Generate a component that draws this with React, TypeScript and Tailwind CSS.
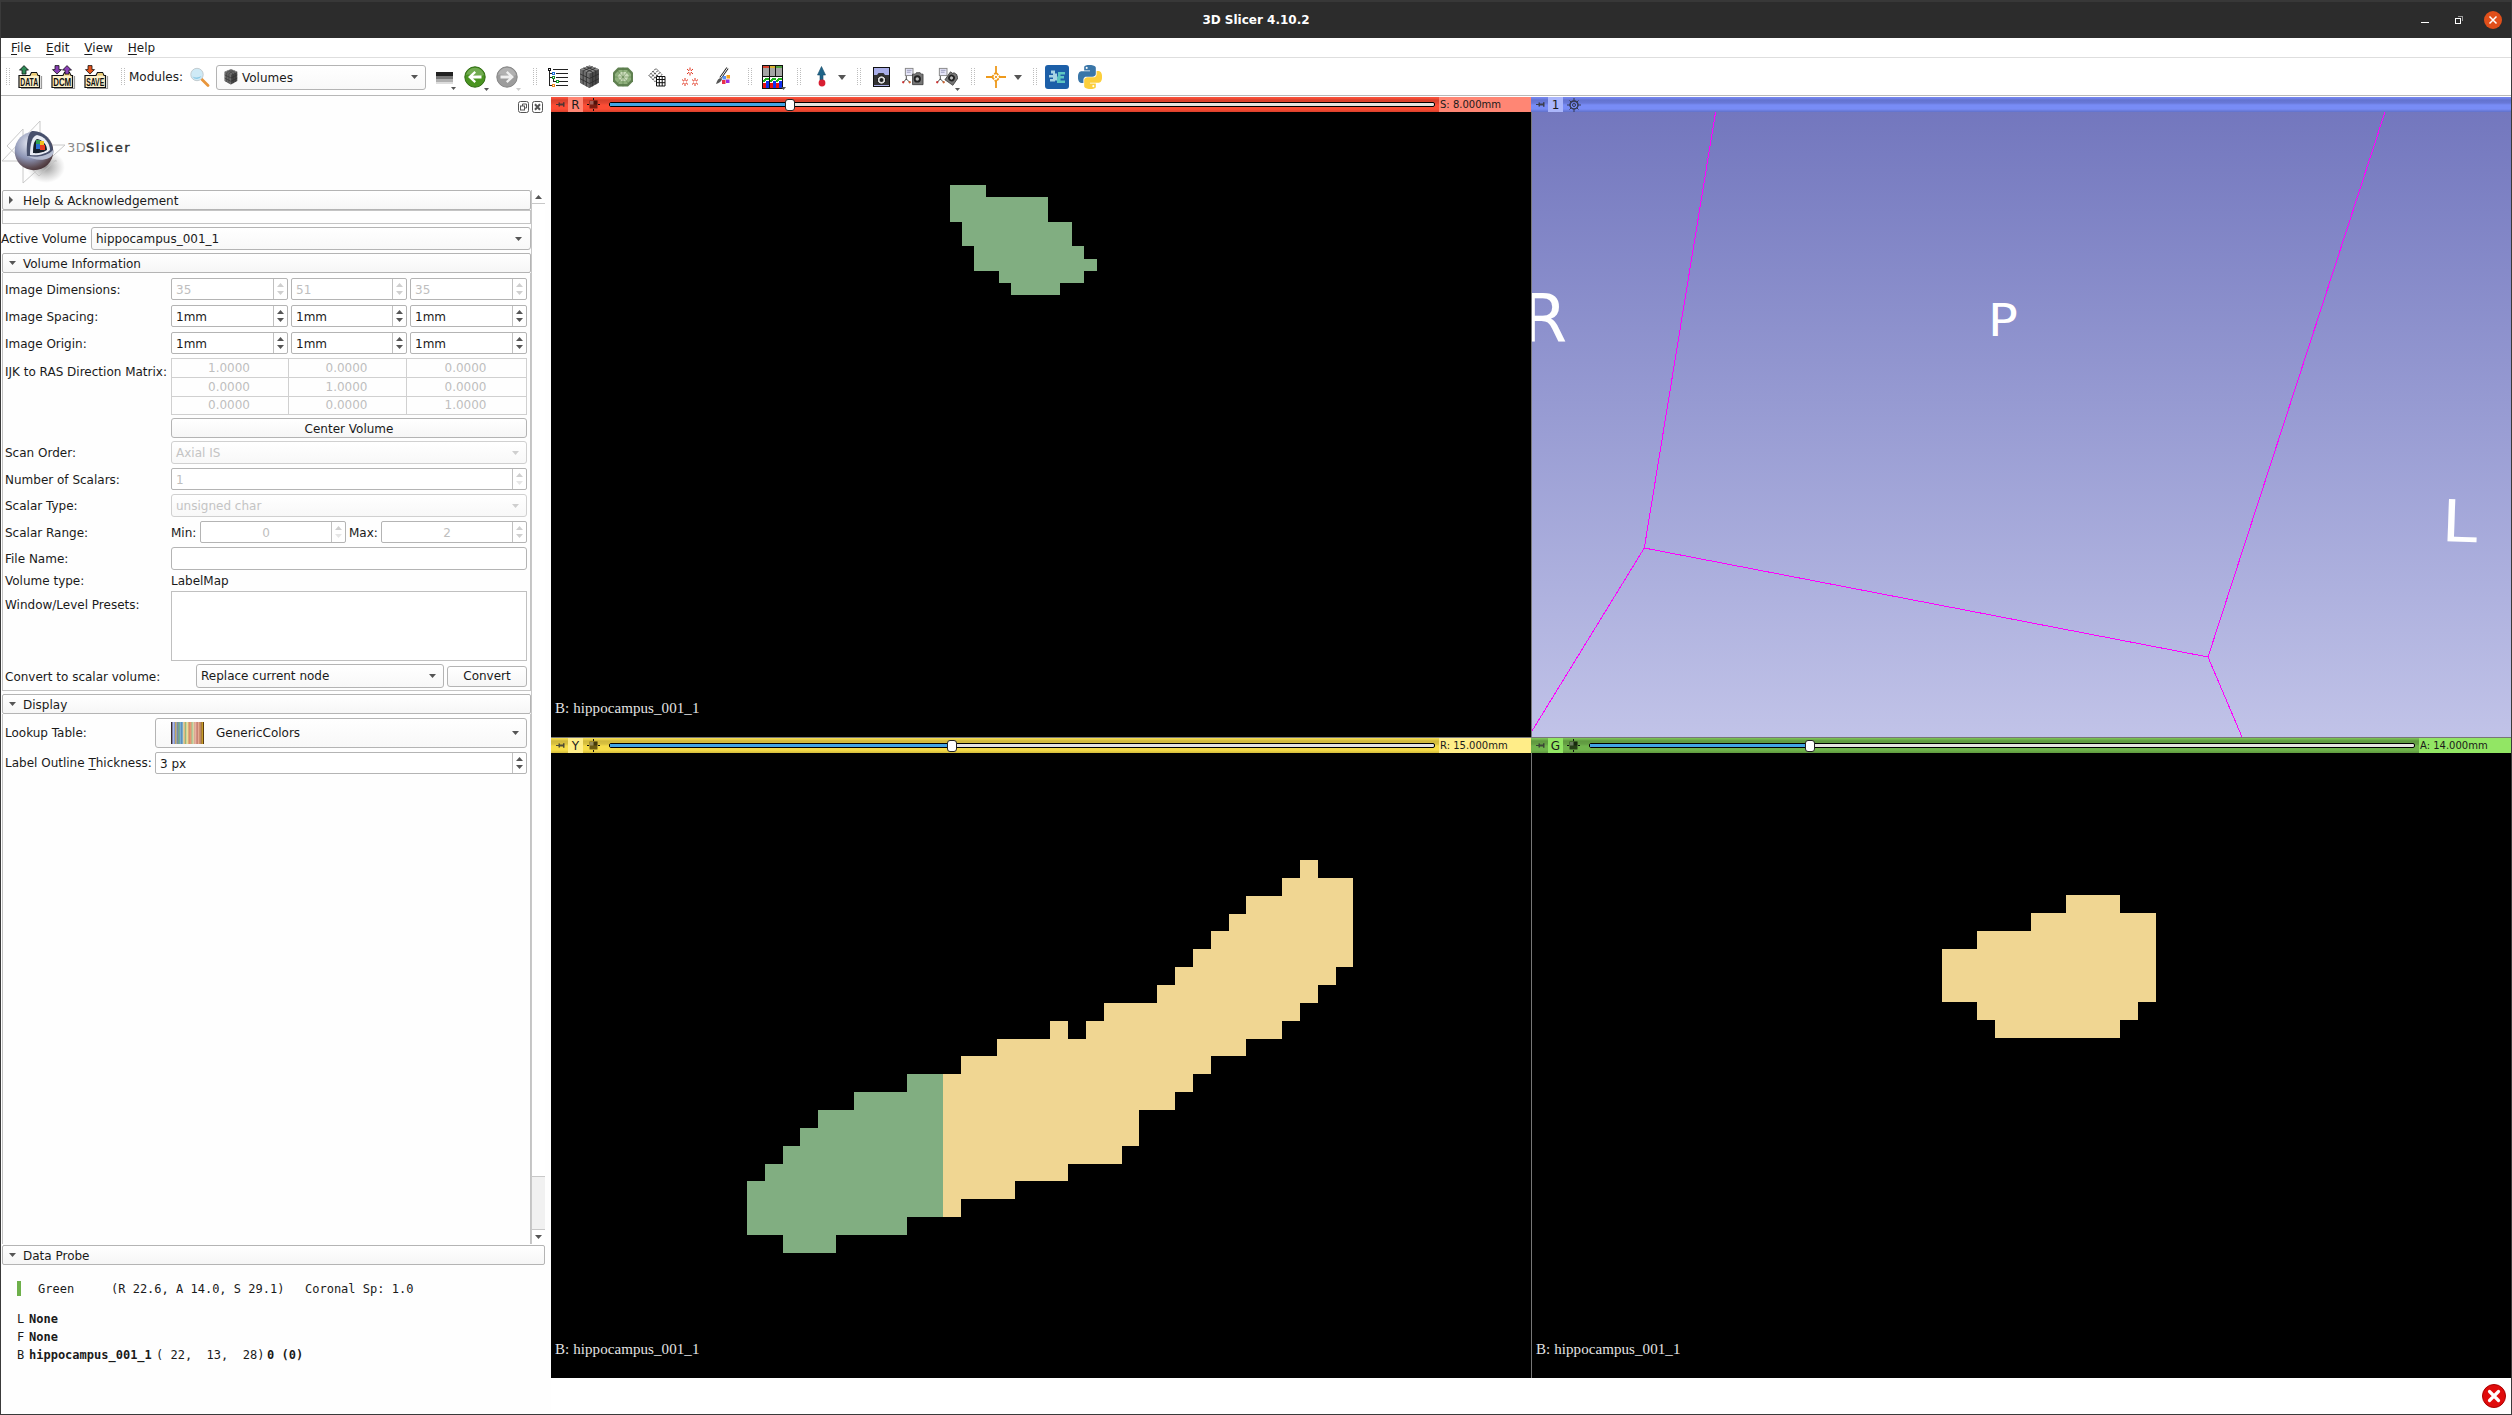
import React from "react";

const PYTHON_HALF =
  "M14.25.18l.9.2.73.26.59.3.45.32.34.34.25.34.16.33.1.3.04.26.02.2-.01.13V8.5l-.05.63-.13.55-.21.46-.26.38-.3.31-.33.25-.35.19-.35.14-.33.1-.3.07-.26.04-.21.02H8.77l-.69.05-.59.14-.5.22-.41.27-.33.32-.27.35-.2.36-.15.37-.1.35-.07.32-.04.27-.02.21v3.06H3.17l-.21-.03-.28-.07-.32-.12-.35-.18-.36-.26-.36-.36-.35-.46-.32-.59-.28-.73-.21-.88-.14-1.05-.05-1.23.06-1.22.16-1.04.24-.87.32-.71.36-.57.4-.44.42-.33.42-.24.4-.16.36-.1.32-.05.24-.01h.16l.06.01h8.16v-.83H6.18l-.01-2.75-.02-.37.05-.34.11-.31.17-.28.25-.26.31-.23.38-.2.44-.18.51-.15.58-.12.64-.1.71-.06.77-.04.84-.02 1.27.05zm-6.3 1.98l-.23.33-.08.41.08.41.23.34.33.22.41.09.41-.09.33-.22.23-.34.08-.41-.08-.41-.23-.33-.33-.22-.41-.09-.41.09z";

function Triangle({ dir = "down", className = "fill-[#555]", w = 7, h = 4 }: { dir?: "up" | "down" | "right"; className?: string; w?: number; h?: number }) {
  const pts = dir === "down" ? `0,0 ${w},0 ${w / 2},${h}` : dir === "up" ? `0,${h} ${w},${h} ${w / 2},0` : `0,0 ${w},${h / 2} 0,${h}`;
  return (
    <svg width={w} height={h} className={`shrink-0 ${className}`}>
      <polygon points={pts} />
    </svg>
  );
}

function Handle({ className = "" }: { className?: string }) {
  return (
    <svg width="4" height="18" className={`shrink-0 ${className}`} shapeRendering="crispEdges" fill="#bdbdbd">
      {[0, 2, 4, 6, 8, 10, 12, 14, 16].map((y) => (
        <React.Fragment key={y}>
          <rect x="0" y={y} width="1" height="1" />
          <rect x="3" y={y} width="1" height="1" />
        </React.Fragment>
      ))}
    </svg>
  );
}

function FolderIcon({ label, arrows }: { label: string; arrows: { x: number; up: boolean; color: string }[] }) {
  return (
    <svg width="24" height="24" viewBox="0 0 24 24" className="shrink-0 overflow-visible">
      <path d="M3 23.5h20.5V11" fill="none" stroke="#999" strokeWidth="1.2" />
      <path d="M1 22.500V10.5h11l1.500-3h5l1.500 3h1.500V22.500z" fill="#fdf0c8" stroke="#111" strokeWidth="1.2" />
      <path d="M13 10.500l1-2.300h4.500l1 2.300z" fill="#e8c66a" />
      {arrows.map((a, i) => (
        <path
          key={i}
          d={a.up ? "M0 0l4.500 4.500h-2.500v4h-4v-4h-2.500z" : "M0 8.500l4.500-4.500h-2.500v-4h-4v4h-2.500z"}
          transform={`translate(${a.x} .6)`}
          fill={a.color}
          stroke="#111"
          strokeWidth=".8"
        />
      ))}
      <text x="11.200" y="20.800" textAnchor="middle" textLength="18" lengthAdjust="spacingAndGlyphs" fontFamily="Liberation Sans" fontWeight="bold" fontSize="10.500" fill="#111">
        {label}
      </text>
    </svg>
  );
}

function CubeIcon({ size }: { size: number }) {
  return (
    <svg width={size} height={size * 1.12} viewBox="0 0 20 22.400" className="shrink-0">
      <path d="M10 .5L19 4v13l-9 5-9-5V4z" fill="#4a4a4a" />
      <path d="M10 .5L19 4l-9 4-9-4z" fill="#8c8c8c" />
      <path d="M1 4l9 4v14l-9-5z" fill="#6f6f6f" />
      <path d="M4 5.500v13M7 6.800v13.500M1 8.500l9 4.300 9-4.300M1 13l9 4.600L19 13M13 6.800v13.500M16 5.500v13M4 2.800l9 4M7 1.600l9 4M16 2.800l-9 4M13 1.600l-9 4" stroke="#2d2d2d" strokeWidth=".8" fill="none" />
    </svg>
  );
}

function RoundArrow({ back }: { back?: boolean }) {
  return (
    <svg width="22" height="22" viewBox="0 0 22 22" className="shrink-0">
      <circle cx="11" cy="11" r="10.200" fill={back ? "#4a9421" : "#9c9c9c"} stroke={back ? "#2f6b12" : "#858585"} />
      <path d="M2 9a9.200 9.200 0 0 1 18 0c-5 3-12-2-18 0z" fill="#fff" opacity=".22" />
      <path
        d="M4 11l6.500-6 1.500 1.700-3 2.800h8.500v3H9l3 2.800-1.500 1.700z"
        transform={back ? undefined : "translate(22 0) scale(-1 1)"}
        fill={back ? "#fff" : "#efefef"}
      />
    </svg>
  );
}

function SmallCamera() {
  return (
    <g>
      <path d="M11 7h3l1-1.500h4L20 7h2v11H11z" fill="#777" stroke="#333" strokeWidth=".8" />
      <circle cx="16" cy="12" r="3.800" fill="#222" />
      <circle cx="16" cy="12" r="1.800" fill="#bbb" />
    </g>
  );
}

function TripodGraph() {
  return (
    <g>
      <rect x="3.500" y="1" width="8" height="7.500" fill="#e6e6f8" stroke="#888" />
      <path d="M5 3h5M5 5h4" stroke="#88a" strokeWidth=".8" />
      <path d="M4.500 9v4M4.500 12l-3.500 4M4.500 12l4 4" stroke="#444" fill="none" />
      <circle cx="1.300" cy="15.500" r="1.200" fill="#c33" />
      <circle cx="8" cy="15.500" r="1.200" fill="#c63" />
    </g>
  );
}

function Toolbar() {
  return (
    <div className="flex h-[38px] items-center border-b border-[#b8b8b8] bg-white pl-[5px] pt-px">
      <Handle />
      <div className="ml-2 flex gap-[9px]">
        <FolderIcon label="DATA" arrows={[{ x: 6, up: true, color: "#2e8b57" }]} />
        <FolderIcon label="DCM" arrows={[{ x: 6, up: false, color: "#8a3fb5" }, { x: 16, up: true, color: "#8a3fb5" }]} />
        <FolderIcon label="SAVE" arrows={[{ x: 6, up: false, color: "#e8541a" }]} />
      </div>
      <Handle className="ml-[13px]" />
      <span className="ml-1 w-[55px] pt-px">Modules:</span>
      <svg width="20" height="20" viewBox="0 0 20 20" className="ml-1.5 shrink-0">
        <path d="M11.500 12l6.500 6.500" stroke="#e8963c" strokeWidth="2.800" strokeLinecap="round" />
        <circle cx="7" cy="7.500" r="6.200" fill="#cfeaf6" stroke="#c3ccd0" />
        <path d="M2.500 9.500q4.500 2 9-.5a5 5 0 0 1-9 .5z" fill="#8fcbe6" />
      </svg>
      <div className="ml-1.5 flex h-[25px] w-[210px] items-center rounded-[3px] border border-[#b4b4b4] bg-gradient-to-b from-white to-[#f8f8f8] pl-[7px] pr-[7px]">
        <CubeIcon size={14} />
        <span className="ml-1 grow pt-[2px]">Volumes</span>
        <Triangle />
      </div>
      <div className="ml-[9px] flex w-[21px] flex-col items-end pt-[7px]">
        <svg width="17" height="15" className="mr-[3px]" shapeRendering="crispEdges">
          <rect width="17" height="4" fill="#222" />
          <rect y="4" width="17" height="3" fill="#777" />
          <rect y="7" width="17" height="3" fill="#b0b0b0" />
          <rect y="10" width="17" height="2" fill="#ddd" />
        </svg>
        <Triangle w={5} h={3} />
      </div>
      <div className="relative ml-2">
        <RoundArrow back />
        <span className="absolute -bottom-[3px] -right-[3px]"><Triangle w={5} h={3} /></span>
      </div>
      <div className="relative ml-[10px]">
        <RoundArrow />
        <span className="absolute -bottom-[3px] -right-[3px]"><Triangle w={5} h={3} className="fill-[#ccc]" /></span>
      </div>
      <Handle className="ml-[15px]" />
      {/* Module shortcuts */}
      <svg width="20" height="24" viewBox="0 0 20 24" className="ml-[11px] shrink-0" shapeRendering="crispEdges">
        <path d="M5 4.500h15M8 8.500h12M8 12.500h12M11 16.500h9M8 20.500h12" stroke="#222" fill="none" />
        <path d="M1.500 5v15.500h3M1.500 8.500h2M1.500 12.500h2M5.500 14v2.500h2" stroke="#222" fill="none" />
        <rect x=".5" y="3.500" width="2" height="2" fill="#fff" stroke="#111" />
        <rect x="4.500" y="7.500" width="2" height="2" fill="#fff" stroke="#1f6fd8" />
        <rect x="4.500" y="11.500" width="2" height="2" fill="#fff" stroke="#1a8a2a" />
        <rect x="8.500" y="15.500" width="2" height="2" fill="#fff" stroke="#1aa030" />
        <rect x="4.500" y="19.500" width="2" height="2" fill="#fff" stroke="#f08a1a" />
      </svg>
      <div className="ml-[11px]"><CubeIcon size={21} /></div>
      <svg width="22" height="20" viewBox="0 0 22 20" className="ml-3 shrink-0">
        <path d="M6 .5h10l5 5v9l-5 5H6l-5-5v-9z" fill="#5f8050" />
        <path d="M7 3h8l4 4v6l-4 4H7l-4-4V7z" fill="#8fb07c" />
        <path d="M9 5h5l3 4-3 5H9L5.500 9.500z" fill="#cbdcbb" />
        <path d="M1 10h20M11 .5v19M5 3l12 14M17 3L5 17" stroke="#567a44" strokeWidth=".5" />
      </svg>
      <svg width="18" height="21" viewBox="0 0 18 21" className="ml-[14px] shrink-0" stroke="#111" fill="none">
        <path d="M1 8.500L8 1.500l6 6-7 7zM3 6.500l6 6M5 4.500l6 6M3 10.500l7-7M5 12.500l7-7" strokeDasharray="1.500 1" />
        <path d="M8.500 9.500h8.500v9.500H8.500z" fill="#fff" />
        <path d="M11.300 9.500v9.500M14.200 9.500v9.500M8.500 12.500H17M8.500 15.700H17" />
      </svg>
      <svg width="18" height="20" viewBox="0 0 18 20" className="ml-[15px] shrink-0" stroke="#e0301a" strokeWidth="1">
        {[[9, 4.500], [4, 15], [14, 15]].map(([x, y]) => (
          <path key={x} d={`M${x} ${y - 4}v3M${x} ${y + 1}v3M${x - 3} ${y - 2.500}l2 1.800M${x + 3} ${y - 2.500}l-2 1.800M${x - 3} ${y + 2.500}l2-1.800M${x + 3} ${y + 2.500}l-2-1.800`} />
        ))}
      </svg>
      <svg width="17" height="20" viewBox="0 0 17 20" className="ml-4 shrink-0">
        <path d="M12.500 1l-7 10" stroke="#222" strokeWidth="2.600" />
        <path d="M12.500 1l-7 10" stroke="#fff" strokeWidth="1" />
        <path d="M1 17c1-4 3-6 4.500-6l1.500 1.500C6 15 4 16 1 17z" fill="#555" />
        <rect x="7.500" y="9" width="3.500" height="3.500" fill="#5b93f5" />
        <rect x="11.500" y="8" width="3.500" height="3.500" fill="#f7a21a" />
        <rect x="7" y="13" width="3.500" height="4" fill="#e8304a" />
        <rect x="11" y="12.500" width="3.500" height="3.500" fill="#9a2be0" />
      </svg>
      <Handle className="ml-[16px]" />
      {/* Layout selector */}
      <div className="relative ml-[10px]">
        <svg width="21" height="24" viewBox="0 0 21 24" className="block" shapeRendering="crispEdges">
          <rect width="21" height="24" fill="#111" />
          <rect x="1" y="1" width="6" height="10" fill="#a5a5a5" /><rect x="1" y="1" width="6" height="2" fill="#d8432f" />
          <rect x="8" y="1" width="5" height="10" fill="#a5a5a5" /><rect x="8" y="1" width="5" height="2" fill="#d8b22f" />
          <rect x="14" y="1" width="6" height="10" fill="#a5a5a5" /><rect x="14" y="1" width="6" height="2" fill="#4e9c3c" />
          {[1, 8, 14].map((x) => (
            <g key={x}>
              <rect x={x} y="12" width="6" height="6" fill="#fff" />
              <path d={`M${x} 17l3-3h3`} stroke="#1db31d" fill="none" strokeWidth="1.500" />
              <rect x={x} y="18" width="3" height="5" fill="#e81010" />
              <rect x={x + 3} y="16" width="3" height="7" fill="#1030f0" />
            </g>
          ))}
        </svg>
        <span className="absolute -bottom-[1px] -right-[3px]"><Triangle w={5} h={3} /></span>
      </div>
      <Handle className="ml-[14px]" />
      <svg width="11" height="22" viewBox="0 0 11 22" className="ml-[15px] shrink-0">
        <path d="M5.500 .5l4 8.500H7v5H4V9H1.500z" fill="#1f6489" stroke="#174b68" strokeWidth=".6" />
        <circle cx="6" cy="17" r="3.400" fill="#d81e32" />
      </svg>
      <span className="ml-[11px]"><Triangle w={8} h={5} /></span>
      <Handle className="ml-[11px]" />
      <svg width="17" height="20" viewBox="0 0 17 20" className="ml-[12px] shrink-0">
        <rect x=".5" y=".5" width="16" height="19" fill="#a9aee8" stroke="#111" />
        <path d="M1 8h3l1.500-2h5L12 8h4v10H1z" fill="#333" />
        <circle cx="8.500" cy="13" r="4.200" fill="#ddd" stroke="#111" />
        <circle cx="8.500" cy="13" r="2" fill="#222" />
      </svg>
      <svg width="22" height="20" viewBox="0 0 23 20" className="ml-3 shrink-0"><TripodGraph /><SmallCamera /></svg>
      <div className="relative ml-3">
        <svg width="22" height="20" viewBox="0 0 23 20" className="block">
          <TripodGraph />
          <g transform="rotate(35 16 12) scale(.92) translate(1 0)"><SmallCamera /></g>
        </svg>
        <span className="absolute -bottom-1 -right-[2px]"><Triangle w={5} h={3} /></span>
      </div>
      <Handle className="ml-[13px]" />
      <svg width="20" height="22" viewBox="0 0 20 22" className="ml-[11px] shrink-0" fill="none" stroke="#ee9a1c" strokeWidth="1.800">
        <path d="M10 0v8M10 14v8M0 11h7M13 11h7" />
        <path d="M6 11L10 6.500l4 4.500-4 4.500z" strokeDasharray="2.500 1" />
        <path d="M10 10v2" />
      </svg>
      <span className="ml-2"><Triangle w={8} h={5} /></span>
      <Handle className="ml-[11px]" />
      <svg width="24" height="24" viewBox="0 0 24 24" className="ml-2 shrink-0">
        <rect width="24" height="24" rx="3" fill="#1c5fa8" />
        <path d="M6 5.500h4v3h2v7h-2v1H5v-2.500h3v-1.500H4V10h4V8.500H6z" fill="#a8d4e4" />
        <path d="M13 7h7v2.500h-4.500v1.500H19v2.500h-3.500v2H20V18h-8v-6.500h1z" fill="#5ec6c2" />
      </svg>
      <svg width="24" height="24" viewBox="0 0 24 24" className="ml-[9px] shrink-0">
        <path d={PYTHON_HALF} fill="#3a76a8" />
        <path d={PYTHON_HALF} fill="#fccf3c" transform="rotate(180 12 12)" />
      </svg>
    </div>
  );
}

function SectionHeader({ title, open = true, className = "" }: { title: string; open?: boolean; className?: string }) {
  return (
    <div className={`flex h-[20px] items-center rounded-[2px] border border-[#b4b4b4] bg-gradient-to-b from-white to-[#f6f6f6] ${className}`}>
      <span className="flex w-[20px] justify-start pl-[6px]">{open ? <Triangle /> : <Triangle dir="right" w={4} h={8} />}</span>
      <span className="pt-[2px]">{title}</span>
    </div>
  );
}

function Spin({ value, disabled, upOnly, center, className }: { value: string; disabled?: boolean; upOnly?: boolean; center?: boolean; className: string }) {
  const dark = disabled ? "fill-[#cfcfcf]" : "fill-[#555]";
  return (
    <div className={`flex h-[22px] shrink-0 rounded-[2px] border border-[#b4b4b4] bg-white ${className}`}>
      <span className={`flex grow items-center pt-[2px] ${center ? "justify-center" : "pl-1"} ${disabled ? "text-[#bebebe]" : ""}`}>{value}</span>
      <span className="flex w-[14px] flex-col items-center justify-center gap-[4px] border-l border-[#c0c0c0]">
        <Triangle dir="up" className={dark} />
        <Triangle className={upOnly ? "fill-[#e6e6e6]" : dark} />
      </span>
    </div>
  );
}

function Combo({ value, disabled, className, children }: { value: string; disabled?: boolean; className: string; children?: React.ReactNode }) {
  return (
    <div className={`flex shrink-0 items-center rounded-[3px] border bg-gradient-to-b from-white to-[#f8f8f8] pl-1 ${disabled ? "border-[#d0d0d0] text-[#c4c4c4]" : "border-[#b4b4b4]"} ${className}`}>
      {children}
      <span className="grow pt-px">{value}</span>
      <Triangle className={disabled ? "fill-[#cfcfcf]" : "fill-[#555]"} />
    </div>
  );
}

function Row({ label, className = "", children }: { label: React.ReactNode; className?: string; children: React.ReactNode }) {
  return (
    <div className={`flex items-center pl-[2px] ${className}`}>
      <span className="w-[166px] shrink-0 whitespace-nowrap pt-[2px]">{label}</span>
      {children}
    </div>
  );
}

const LUT = ["#3a2a2a", "#7d7fa8", "#a9b8f0", "#7d8fc8", "#b89a50", "#9a9a9a", "#587a9a", "#6a8f6a", "#4f9a8a", "#5f9ad0", "#2f6fa8", "#5f9ac0", "#e8d080", "#d89850", "#5aa85a", "#e8e0a0", "#f0c868", "#b87848", "#d8684a", "#e89858", "#70a878", "#e8e8a0", "#c89070", "#e8b0a0", "#d8887a", "#b86858", "#e8a890", "#d08868", "#b88868", "#a8783a", "#c8a028", "#5a3a10"];

function SlicerLogo() {
  return (
    <svg width="64" height="70" viewBox="0 0 64 70" className="shrink-0">
      <defs>
        <radialGradient id="ball" cx=".38" cy=".3" r=".8">
          <stop offset="0" stopColor="#e6eaf4" />
          <stop offset=".5" stopColor="#8c94b4" />
          <stop offset=".8" stopColor="#5c4a50" />
          <stop offset="1" stopColor="#3a2226" />
        </radialGradient>
        <radialGradient id="ballShadow">
          <stop offset="0" stopColor="#555" stopOpacity=".6" />
          <stop offset="1" stopColor="#777" stopOpacity="0" />
        </radialGradient>
      </defs>
      <ellipse cx="45" cy="48" rx="19" ry="16" fill="url(#ballShadow)" />
      <path d="M1 42L39 2v30M1 42h55M22 64V10L6 27l32 30 17-16M22 64l42-38H30" fill="none" stroke="#c4c4c4" strokeWidth=".9" />
      <circle cx="33" cy="32" r="19.300" fill="url(#ball)" />
      <path d="M26 37C25 24 27 14 31 12c10-1 20 8 21 19-4 6-15 8-26 6z" fill="#47506c" />
      <path d="M29 36C29 25 31 17 36 16c7 1 13 8 13 15-4 4-12 6-20 5z" fill="#e8ecf4" />
      <path d="M32 34c0-8 1-12 4-14 6 1 10 6 10 11-3 2.500-9 3.500-14 3z" fill="#16202c" />
      <rect x="35" y="21" width="4" height="4" fill="#2fa050" /><rect x="39" y="22" width="4" height="4" fill="#f0c020" />
      <rect x="35" y="25" width="4" height="5" fill="#2a70d0" /><rect x="39" y="26" width="5" height="5" fill="#e83a20" />
      <path d="M26 37c10 2 21 0 26-6 1.500 2 0 6-4 8-6 3-16 2-22-2z" fill="#b6bed2" />
    </svg>
  );
}

function ModulePanel() {
  return (
    <div className="flex w-[550px] shrink-0 flex-col bg-[#fefefe]">
      <div className="flex h-[94px] flex-col">
        <div className="flex justify-end gap-[3px] pr-[8px] pt-[5px]">
          <svg width="11" height="12" viewBox="0 0 11 12" fill="none" stroke="#555">
            <rect x=".5" y=".5" width="10" height="11" rx="2" /><rect x="2.500" y="5" width="4" height="4" /><path d="M4.500 5V3h4v4h-2" />
          </svg>
          <svg width="11" height="12" viewBox="0 0 11 12" fill="none" stroke="#555">
            <rect x=".5" y=".5" width="10" height="11" rx="2" /><path d="M3 3.300l5 5.400M8 3.300L3 8.700" strokeWidth="2" />
          </svg>
        </div>
        <div className="mt-[4px] flex items-center">
          <div className="-mb-4 mt-0.5"><SlicerLogo /></div>
          <span className="mt-[3px] pl-[2px] pt-[2px] text-[13px] leading-none tracking-[1.500px]"><span className="tracking-[0.400px] text-[#8a8a8a]">3D</span><b className="font-normal text-[#333] [-webkit-text-stroke:0.400px_#333]">Slicer</b></span>
        </div>
      </div>

      <div className="flex h-[1054px] pl-px">
        <div className="flex w-[529px] flex-col">
          <SectionHeader title="Help & Acknowledgement" open={false} />
          <div className="h-[14px] border border-[#c4c4c4]" />
          <div className="mt-[3px] flex items-center">
            <span className="-ml-px w-[90px] whitespace-nowrap pt-px">Active Volume</span>
            <Combo value="hippocampus_001_1" className="h-[23px] w-[440px] pr-[8px]" />
          </div>
          <SectionHeader title="Volume Information" className="mt-[3px]" />
          <div className="flex h-[418px] flex-col border border-[#c4c4c4] border-t-0 pt-[5px]">
            <Row label="Image Dimensions:">
              <Spin value="35" disabled className="w-[117px]" />
              <Spin value="51" disabled className="ml-[3px] w-[116px]" />
              <Spin value="35" disabled className="ml-[3px] w-[117px]" />
            </Row>
            <Row label="Image Spacing:" className="mt-[5px]">
              <Spin value="1mm" className="w-[117px]" />
              <Spin value="1mm" className="ml-[3px] w-[116px]" />
              <Spin value="1mm" className="ml-[3px] w-[117px]" />
            </Row>
            <Row label="Image Origin:" className="mt-[5px]">
              <Spin value="1mm" className="w-[117px]" />
              <Spin value="1mm" className="ml-[3px] w-[116px]" />
              <Spin value="1mm" className="ml-[3px] w-[117px]" />
            </Row>
            <div className="mt-[4px] flex pl-[2px]">
              <span className="w-[166px] whitespace-nowrap pt-[7px]">IJK to RAS Direction Matrix:</span>
              <div className="grid h-[57px] w-[356px] grid-cols-[117px_118px_120px] grid-rows-[19px_19px_18px] border-l border-t border-[#d0d0d0] text-center text-[#bebebe]">
                {["1.0000", "0.0000", "0.0000", "0.0000", "1.0000", "0.0000", "0.0000", "0.0000", "1.0000"].map((v, i) => (
                  <span key={i} className="flex items-center justify-center border-b border-r border-[#d0d0d0] pr-[2px]">{v}</span>
                ))}
              </div>
            </div>
            <Row label="" className="mt-[3px]">
              <button className="h-[20px] w-[356px] rounded-[3px] border border-[#b4b4b4] bg-gradient-to-b from-white to-[#f6f6f6] leading-[20px]">Center Volume</button>
            </Row>
            <Row label="Scan Order:" className="mt-[3px]"><Combo value="Axial IS" disabled className="h-[23px] w-[356px] pr-[7px]" /></Row>
            <Row label="Number of Scalars:" className="mt-[4px]"><Spin value="1" disabled upOnly className="w-[356px]" /></Row>
            <Row label="Scalar Type:" className="mt-[4px]"><Combo value="unsigned char" disabled className="h-[23px] w-[356px] pr-[7px]" /></Row>
            <Row label="Scalar Range:" className="mt-[4px]">
              <span className="w-[29px] pt-[2px]">Min:</span>
              <Spin value="0" disabled upOnly center className="w-[146px]" />
              <span className="ml-[3px] w-[32px] pt-[2px]">Max:</span>
              <Spin value="2" disabled center className="w-[146px]" />
            </Row>
            <Row label="File Name:" className="mt-[4px]"><div className="h-[23px] w-[356px] rounded-[3px] border border-[#b4b4b4] bg-white" /></Row>
            <Row label="Volume type:" className="mt-[2px] h-[18px] pb-px"><span className="pt-[2px]">LabelMap</span></Row>
            <div className="mt-[1px] flex pl-[2px]">
              <span className="w-[166px] pt-[7px]">Window/Level Presets:</span>
              <div className="h-[70px] w-[356px] border border-[#c0c0c0] bg-white" />
            </div>
            <Row label="Convert to scalar volume:" className="mt-[3px]">
              <Combo value="Replace current node" className="ml-[25px] h-[24px] w-[248px] pr-[7px]" />
              <button className="ml-[3px] h-[21px] w-[80px] rounded-[3px] border border-[#b4b4b4] bg-gradient-to-b from-white to-[#f6f6f6] leading-[19px]">Convert</button>
            </Row>
          </div>
          <SectionHeader title="Display" className="mt-[3px]" />
          <div className="flex grow flex-col border-x border-[#c4c4c4] pt-[4px]">
            <div className="flex items-center pl-[2px]">
              <span className="w-[150px] pt-px">Lookup Table:</span>
              <Combo value="GenericColors" className="h-[30px] w-[372px] pr-[7px]">
                <svg width="33" height="22" className="ml-[11px] mr-3" preserveAspectRatio="none" viewBox="0 0 32 22">
                  {LUT.map((c, i) => <rect key={i} x={i} width="1.050" height="22" fill={c} />)}
                </svg>
              </Combo>
            </div>
            <div className="mt-[4px] flex items-center pl-[2px]">
              <span className="w-[150px] whitespace-nowrap pt-px">Label Outline <u className="underline-offset-2">T</u>hickness:</span>
              <Spin value="3 px" className="w-[372px]" />
            </div>
          </div>
        </div>
        {/* Scroll bar */}
        <div className="flex w-[14px] flex-col items-center border-l border-[#c8c8c8] bg-white">
          <div className="flex h-[14px] w-full items-center justify-center border-b border-[#c8c8c8]"><Triangle dir="up" /></div>
          <div className="w-full grow" />
          <div className="h-[54px] w-full border-y border-[#c8c8c8] bg-[#f1f1f1]" />
          <div className="flex h-[14px] items-center justify-center"><Triangle /></div>
        </div>
      </div>

      <SectionHeader title="Data Probe" className="ml-px mt-px w-[543px]" />
      <div className="whitespace-pre pl-4 pt-4 font-['DejaVu_Sans_Mono',monospace] text-[12px] leading-[18px]">
        <div className="flex h-[15px] items-center">
          <div className="h-[15px] w-1 bg-[#6eb04b]" />
          <span className="ml-[17px] w-[73px]">Green</span>
          <span className="w-[194px]">(R 22.6, A 14.0, S 29.1)</span>
          <span>Coronal Sp: 1.0</span>
        </div>
        <div className="mt-[14px] flex"><span className="w-3">L</span><b>None</b></div>
        <div className="flex"><span className="w-3">F</span><b>None</b></div>
        <div className="flex"><span className="w-3">B</span><b className="w-[127px]">hippocampus_001_1</b><span className="w-[111px]">( 22,  13,  28)</span><b>0 (0)</b></div>
      </div>
    </div>
  );
}

const BAR = {
  red: { bar: "bg-[linear-gradient(to_bottom,#f9503a_0,#f9503a_1px,#d8402b_3px,#e24531_6px,#fc4c34_8px,#fc4c34_12px,#d8402b_15px)]", box: "bg-[#ff8674]", icon: "#7a1c10" },
  yellow: { bar: "bg-[linear-gradient(to_bottom,#f7df50_0,#f0d64a_1px,#d0b83c_3px,#d8c040_6px,#f6dc48_8px,#f6dc48_12px,#d4bc3c_15px)]", box: "bg-[#ffed88]", icon: "#6b5a12" },
  green: { bar: "bg-[linear-gradient(to_bottom,#7cc856_0,#76b850_1px,#5f9840_3px,#649e44_6px,#70b44c_8px,#70b44c_12px,#609a40_15px)]", box: "bg-[#92e664]", icon: "#263f18" },
  blue: { bar: "bg-[linear-gradient(to_bottom,#7486f0_0,#7284ec_1px,#6373cf_3px,#6878d8_6px,#788cf6_8px,#788cf6_12px,#6070c8_15px)]", box: "bg-[#aab6fb]", icon: "#2b3566" },
};

function ViewBar({ color, letter, value, fill }: { color: keyof typeof BAR; letter: string; value?: string; fill?: string }) {
  const c = BAR[color];
  return (
    <div className={`flex h-[15px] shrink-0 items-center ${c.bar}`}>
      <svg width="9" height="5" viewBox="0 0 9 5" className="ml-[5px] mr-[3px] shrink-0" fill="#333" opacity=".85">
        <path d="M0 2h2.500V.5H4V1.500h3V.3h1.500v4.400H7V3.500H4v1H2.500V3H0z" />
      </svg>
      <span className={`flex h-[15px] w-[15px] items-center justify-center pt-px ${c.box}`}>{letter}</span>
      {value ? (
        <svg width="13" height="13" viewBox="0 0 13 13" className="ml-[4px] shrink-0">
          <path d="M0 6.500h2M11 6.500h2M6.500 0v2M6.500 11v2" stroke="#111" />
          <rect x="2.500" y="2.500" width="8" height="8" fill={c.icon} />
          <path d="M6.500 2.500h4v4h-4z" fill="#000" opacity=".35" />
          <path d="M3 3h3.500v3.500H3z" fill="#fff" opacity=".3" />
        </svg>
      ) : (
        <svg width="14" height="14" viewBox="0 0 14 14" className="ml-[4px] shrink-0" fill="none" stroke="#33374e">
          <circle cx="7" cy="7" r="4" strokeWidth="1.500" /><circle cx="7" cy="7" r="1.500" />
          <path d="M7 0v3M7 11v3M0 7h3M11 7h3M2.500 2.500l2 2M9.500 9.500l2 2M11.500 2.500l-2 2M4.500 9.500l-2 2" />
        </svg>
      )}
      {value && (
        <>
          <div className="relative ml-[9px] mr-[4px] flex h-[5px] grow rounded-[2px] border border-black bg-[#e6e4e0]">
            <div className="bg-[#42a4e4]" style={{ width: fill }} />
            <div className="absolute -top-[4.500px] h-3 w-[10px] -translate-x-1/2 rounded-[3px] border border-[#222] bg-white" style={{ left: fill }} />
          </div>
          <span className={`flex h-[15px] w-[92px] items-center whitespace-nowrap pl-px text-[10px] ${c.box}`}>{value}</span>
        </>
      )}
    </div>
  );
}

function Caption() {
  return <span className="absolute bottom-[17px] left-[4px] font-['Liberation_Serif',serif] text-[15px] tracking-[0.080px] leading-[24px] text-[#e4e4e4]">B: hippocampus_001_1</span>;
}

export default function App() {
  return (
    <div className="flex h-[1415px] w-[2512px] flex-col overflow-hidden border-b border-l border-r border-[#3a3a3a] bg-white font-['DejaVu_Sans',sans-serif] text-[12px] leading-[15px] text-[#1a1a1a]">
      {/* Window title */}
      <div className="grid h-[38px] shrink-0 grid-cols-[1fr_auto_1fr] items-center border-t-2 border-[#383838] bg-[#2c2c2c] text-white">
        <span />
        <span className="text-[12px] font-bold">3D Slicer 4.10.2</span>
        <div className="flex items-center justify-end pr-[9px]">
          <div className="mt-1 h-px w-2 bg-white" />
          <svg width="8" height="8" className="ml-[26px]" fill="none" shapeRendering="crispEdges">
            <path d="M3 .5h4.500V5" stroke="#999" /><rect x=".5" y="2.500" width="5" height="5" stroke="#fff" />
          </svg>
          <svg width="18" height="18" className="ml-[21px]">
            <circle cx="9" cy="9" r="9" fill="#e04f1a" /><path d="M5.500 5.500l7 7M12.500 5.500l-7 7" stroke="#fff" strokeWidth="1.500" />
          </svg>
        </div>
      </div>
      {/* Menu */}
      <div className="flex h-[20px] shrink-0 items-center gap-[15px] border-b border-[#dedede] bg-white pl-[10px] pt-[2px]">
        {["File", "Edit", "View", "Help"].map((m) => (
          <span key={m}><u className="underline-offset-2">{m[0]}</u>{m.slice(1)}</span>
        ))}
      </div>
      <Toolbar />
      <div className="flex min-h-0 grow">
        <ModulePanel />
        <div className="flex grow flex-col">
          <div className="grid h-[1282px] shrink-0 grid-cols-[980px_980px] grid-rows-[641px_640px] pt-px">
            <div className="flex flex-col">
              <ViewBar color="red" letter="R" value="S: 8.000mm" fill="21.800%" />
              <div className="relative grow border-b border-[#777] bg-black">
                <svg width="980" height="625" viewBox="551 112 980 625" className="block" shapeRendering="crispEdges">
                  <path fill="#81ae81" d="M950 185H986V197H1048V222H1072V246H1084V259H1097V271H1084V283H1060V295H1011V283H999V271H974V246H962V222H950z" />
                </svg>
                <Caption />
              </div>
            </div>
            <div className="flex flex-col">
              <ViewBar color="blue" letter="1" />
              <div className="relative grow overflow-hidden border-b border-l border-[#777] bg-gradient-to-b from-[#7377be] to-[#c1c3e8]">
                <svg width="979" height="625" viewBox="1532 112 979 625" className="block" shapeRendering="crispEdges" fill="none" stroke="#ff00ff">
                  <path d="M1715.600 112L1644.300 548L1532 731M1644.300 548L2208 657L2385 112M2208 657L2242 737" />
                </svg>
                <span className="absolute -left-[10px] top-[167px] text-[65px] leading-[80px] text-white">R</span>
                <span className="absolute left-[456px] top-[179px] origin-left scale-x-110 text-[45px] leading-[60px] text-white">P</span>
                <span className="absolute left-[910px] top-[369px] origin-left rotate-2 scale-x-110 text-[58px] leading-[80px] text-white">L</span>
              </div>
            </div>
            <div className="flex flex-col">
              <ViewBar color="yellow" letter="Y" value="R: 15.000mm" fill="41.500%" />
              <div className="relative grow bg-black">
                <svg width="980" height="625" viewBox="551 753 980 625" className="block" shapeRendering="crispEdges">
                  <g transform="translate(746.900 860) scale(17.840 17.860)">
                    <path fill="#81ae81" d="M9 12H11V20H9V21H5V22H2V21H0V18H1V17H2V16H3V15H4V14H6V13H9z" />
                    <path fill="#f0d692" d="M11 12H12V11H14V10H17V9H18V10H19V9H20V8H23V7H24V6H25V5H26V4H27V3H28V2H30V1H31V0H32V1H34V6H33V7H32V8H31V9H30V10H28V11H26V12H25V13H24V14H22V16H21V17H18V18H15V19H12V20H11z" />
                  </g>
                </svg>
                <Caption />
              </div>
            </div>
            <div className="flex flex-col">
              <ViewBar color="green" letter="G" value="A: 14.000mm" fill="26.700%" />
              <div className="relative grow border-l border-[#777] bg-black">
                <svg width="979" height="625" viewBox="1532 753 979 625" className="block" shapeRendering="crispEdges">
                  <g transform="translate(1941.600 895) scale(17.840 17.860)">
                    <path fill="#f0d692" d="M7 0H10V1H12V6H11V7H10V8H3V7H2V6H0V3H2V2H5V1H7z" />
                  </g>
                </svg>
                <Caption />
              </div>
            </div>
          </div>
          {/* Status bar */}
          <div className="flex grow items-center justify-end pr-[5px]">
            <svg width="24" height="24" viewBox="0 0 24 24">
              <circle cx="12" cy="12" r="11.500" fill="#e00b0b" stroke="#a00" />
              <path d="M7.500 7.500l9 9M16.500 7.500l-9 9" stroke="#fff" strokeWidth="3.200" strokeLinecap="round" />
            </svg>
          </div>
        </div>
      </div>
    </div>
  );
}
